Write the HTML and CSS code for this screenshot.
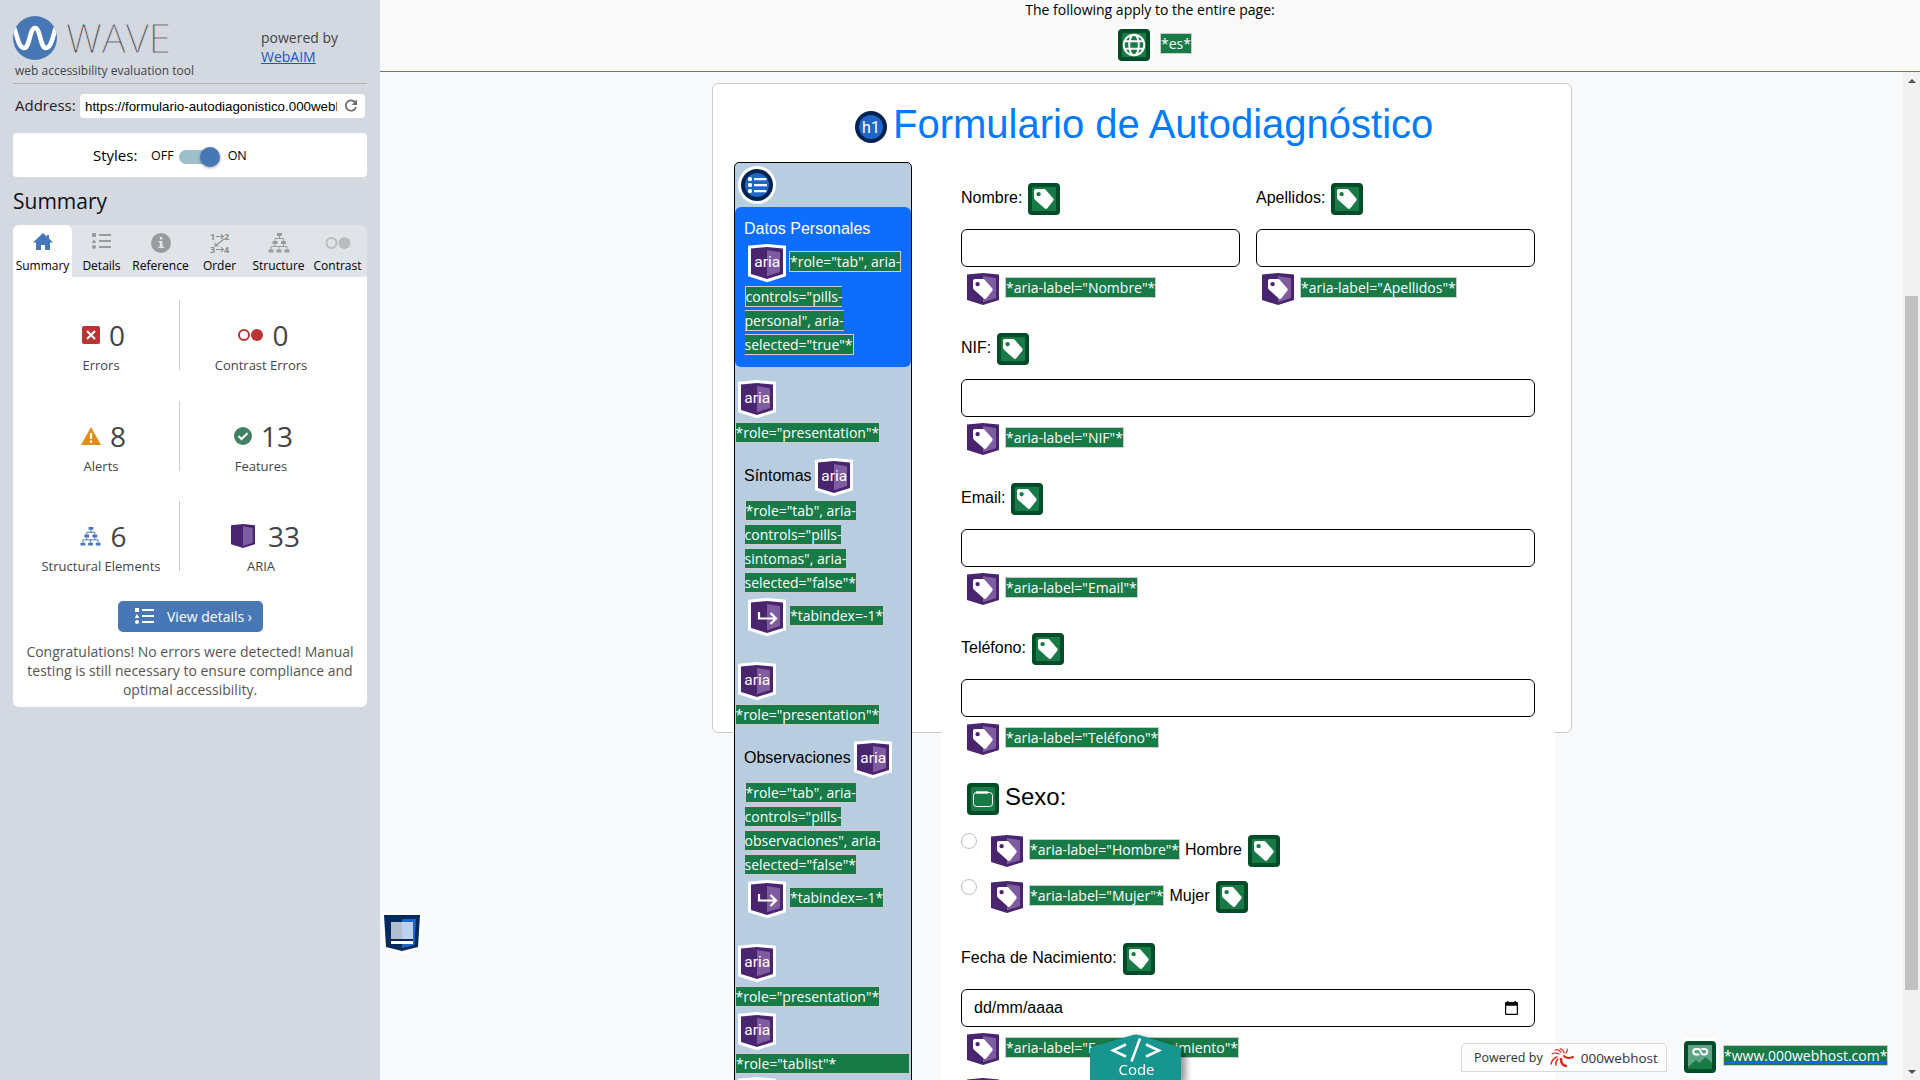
FILE: index.html
```html
<!DOCTYPE html>
<html lang="es">
<head>
<meta charset="utf-8">
<title>WAVE - Formulario de Autodiagnóstico</title>
<link rel="stylesheet" href="styles.css">
</head>
<body>
<svg class="sprite" aria-hidden="true">
  <symbol id="box" viewBox="0 0 32 32" overflow="visible">
    <path d="M0 1.5 16 0 32 1.5V27L16 32 0 27z" fill="none" stroke="#fff" stroke-width="6"/>
    <path d="M0 1.5 16 0 32 1.5V27L16 32 0 27z" fill="#4a256f"/>
    <path d="M16 3 29 5.2V25L16 29.2z" fill="#7f5b9f"/>
  </symbol>
  <symbol id="tag" viewBox="0 0 32 32">
    <path fill-rule="evenodd" fill="#fff" d="M8 6h7.600c1 0 1.600.3 2.300 1l7.200 8.200c.8 1 .8 1.800 0 2.800l-5.800 7.200c-.8.9-2 .9-2.800 0L7 16.700c-.6-.7-1-1.300-1-2.200V8c0-1.200.8-2 2-2zm2.600 2.900a2.200 2.200 0 1 0 0 4.400 2.200 2.200 0 0 0 0-4.400z"/>
  </symbol>
  <symbol id="aria" viewBox="0 0 32 32" overflow="visible"><use href="#box"/><text x="16.300" y="19.500" text-anchor="middle" font-family="Roboto, sans-serif" font-size="15.500" fill="#fff">aria</text></symbol>
  <symbol id="aria-tag" viewBox="0 0 32 32" overflow="visible"><use href="#box"/><use href="#tag"/></symbol>
  <symbol id="aria-index" viewBox="0 0 32 32" overflow="visible"><use href="#box"/><path d="M8 11v6.500h17M19.500 12l5.500 5.500-5.500 5.500" fill="none" stroke="#fff" stroke-width="2.200"/></symbol>
  <symbol id="green" viewBox="0 0 32 32" overflow="visible">
    <rect x="-3" y="-3" width="38" height="38" rx="6" fill="#fff"/>
    <rect width="32" height="32" rx="4" fill="#004d27"/><rect x="4" y="4" width="24" height="24" rx="1" fill="#177a47"/>
  </symbol>
  <symbol id="label" viewBox="0 0 32 32" overflow="visible"><use href="#green"/><use href="#tag"/></symbol>
  <symbol id="fieldset" viewBox="0 0 32 32" overflow="visible"><use href="#green"/><rect x="6.500" y="9.500" width="19" height="14" rx="3" fill="none" stroke="#fff"/><path d="M9 9.500h12" stroke="#fff" stroke-width="2.400"/></symbol>
  <symbol id="lang" viewBox="0 0 32 32" overflow="visible"><use href="#green"/><g fill="none" stroke="#fff" stroke-width="1.900"><circle cx="16" cy="16" r="10.300"/><ellipse cx="16" cy="16" rx="4.800" ry="10.300"/><path d="M7 12.200h18M7 19.800h18"/></g></symbol>
  <symbol id="linkimg" viewBox="0 0 32 32" overflow="visible"><use href="#green"/><path d="M4 4h24v18l-6.500-6-6 6-3.500-3-8 7z" fill="#5fa583"/><path d="M14.500 13.500H12a2.700 2.700 0 0 1 0-5.500h2.500c2.500 0 2 5.500 4.500 5.500h1.500a2.700 2.700 0 0 0 0-5.500H18" fill="none" stroke="#fff" stroke-width="1.900" stroke-linecap="round"/></symbol>
  <symbol id="structure" viewBox="0 0 22 20"><path fill="currentColor" d="M9 0h5v3H9zM4.500 8h5v3h-5zM13 8h5v3h-5zM.5 16.500h5v3h-5zM8.500 16.500h5v3h-5zM16.500 16.500h5v3h-5z"/><path fill="none" stroke="currentColor" d="M11.500 3v3M7 8V5.500h8.500V8M7 11v2.500M15.500 11v2.500M3 16.500v-3h16v3M11 13.500v3"/></symbol>
  <symbol id="details" viewBox="0 0 19 16"><path fill="currentColor" d="M0 0h4v4H0zM2 6l2.300 4H-.3zM7 1h12v2H7zM7 7h12v2H7zM7 13h12v2H7z"/><circle cx="2" cy="14" r="2" fill="currentColor"/></symbol>
</svg>

<div class="app">
  <aside class="sidebar">
    <header class="brand">
      <div class="brand-main">
        <div class="logo">
          <svg width="44" height="44" viewBox="0 0 44 44"><clipPath id="c"><circle cx="22" cy="22" r="22"/></clipPath><circle cx="22" cy="22" r="22" fill="#4877b6"/><path clip-path="url(#c)" d="M1 12C3.500 16 5 32 11 32S16.500 12 22 12s5 20 11 20 7.500-16 10-20" fill="none" stroke="#fff" stroke-width="4.600"/></svg>
          <span class="logo-text">WAVE</span>
        </div>
        <p class="tagline">web accessibility evaluation tool</p>
      </div>
      <p class="powered">powered by<br><a class="webaim">WebAIM</a></p>
    </header>
    <div class="address"><span class="address-label">Address:</span>
      <div class="address-box"><span class="url">https://formulario-autodiagonistico.000webh</span>
        <svg width="14" height="14" viewBox="0 0 14 14"><path d="M11.300 3.600A5.200 5.200 0 1 0 12 8" fill="none" stroke="#666" stroke-width="1.700"/><path d="M13 .6v5.400H7.800z" fill="#666"/></svg>
      </div>
    </div>
    <div class="styles-box"><span class="styles-label">Styles:</span><span class="state">OFF</span><span class="switch"><span class="thumb"></span></span><span class="state">ON</span></div>
    <h2 class="heading">Summary</h2>
    <nav class="tabs">
      <div class="tab active"><svg width="20" height="20" viewBox="0 0 20 20"><path fill="#4877b6" d="M10 0 0 9.500h3V17h5v-5h4v5h5V9.500h3l-4-4V2h-2v1.800z"/></svg>Summary</div>
      <div class="tab"><svg class="muted" width="19" height="20"><use href="#details" y="0" width="19" height="16"/></svg>Details</div>
      <div class="tab"><svg width="20" height="20" viewBox="0 0 20 20"><circle cx="10" cy="10" r="10" fill="#999b9e"/><path fill="#e0e3e7" d="M8.800 4h2.600v2.500H8.800zM7.500 8h4v5.500H13V15H7.500v-1.500h1.300v-4H7.500z"/></svg>Reference</div>
      <div class="tab"><svg class="order" width="20" height="20" viewBox="0 0 20 20" fill="none" stroke="#8c8e91" stroke-width="1.100"><path d="M6 3.500h7M11 1.200l2.300 2.300L11 5.800M6 16.500h7M11 14.200l2.300 2.300-2.300 2.300M14 6 5 13M5 9.800V13h3.500"/><g class="order-num"><text x="0" y="7">1</text><text x="14" y="7">2</text><text x="0" y="20">3</text><text x="14" y="20">4</text></g></svg>Order</div>
      <div class="tab"><svg class="muted" width="22" height="20"><use href="#structure"/></svg>Structure</div>
      <div class="tab"><svg width="26" height="20" viewBox="0 0 26 20"><circle cx="6.500" cy="10" r="5" fill="none" stroke="#b9bbbe" stroke-width="2"/><circle cx="19.500" cy="10" r="6" fill="#b9bbbe"/></svg>Contrast</div>
    </nav>
    <section class="panel">
      <div class="stats">
        <div class="stat left"><div class="value"><svg width="18" height="18" viewBox="0 0 18 18"><rect width="18" height="18" rx="2" fill="#b93434"/><path d="m5 5 8 8m0-8-8 8" stroke="#fff" stroke-width="2"/></svg>0</div>Errors</div>
        <div class="stat"><div class="value"><svg width="25" height="18" viewBox="0 0 25 18"><circle cx="6" cy="9" r="5" fill="none" stroke="#b93434" stroke-width="2"/><circle cx="19" cy="9" r="6" fill="#b93434"/></svg>0</div>Contrast Errors</div>
        <div class="stat left"><div class="value"><svg width="20" height="18" viewBox="0 0 20 18"><path d="M10 0l10 18H0z" fill="#e18c15"/><path d="M10 6v6M10 13.500v2.200" stroke="#fff" stroke-width="2.200"/></svg>8</div>Alerts</div>
        <div class="stat"><div class="value"><svg width="18" height="18" viewBox="0 0 18 18"><circle cx="9" cy="9" r="9" fill="#438062"/><path d="m4.500 9 3 3 6-5.800" fill="none" stroke="#fff" stroke-width="2"/></svg>13</div>Features</div>
        <div class="stat left"><div class="value"><svg class="blue" width="21" height="19"><use href="#structure"/></svg>6</div>Structural Elements</div>
        <div class="stat"><div class="value wide"><svg width="24" height="24" viewBox="0 0 32 32"><path d="M0 1.500 16 0 32 1.500V27L16 32 0 27z" fill="#4a256f"/><path d="M16 3 29 5.200V25L16 29.200z" fill="#7f5b9f"/></svg>33</div>ARIA</div>
      </div>
      <div class="view"><svg width="19" height="16"><use href="#details"/></svg>View details ›</div>
      <p class="message">Congratulations! No errors were detected! Manual testing is still necessary to ensure compliance and optimal accessibility.</p>
    </section>
  </aside>

  <div class="main">
    <header class="page-bar">
      <p class="page-bar-text">The following apply to the entire page:</p>
      <div class="page-bar-icons"><svg class="icon"><use href="#lang"/></svg><span class="note">*es*</span></div>
    </header>
    <div class="viewport">
      <div class="canvas">
        <div class="card">
          <h1 class="title"><svg class="icon" viewBox="0 0 32 32"><circle cx="16" cy="16" r="16" fill="#002250"/><circle cx="16" cy="16" r="12" fill="#1f66c9"/><text x="16" y="21.500" text-anchor="middle" class="h1-mark">h1</text></svg><span class="title-text">Formulario de Autodiagnóstico</span></h1>
          <div class="columns">
            <div class="pills">
              <div class="list-row"><svg class="icon" viewBox="0 0 32 32"><circle cx="16" cy="16" r="19" fill="#fff"/><circle cx="16" cy="16" r="16" fill="#002250"/><circle cx="16" cy="16" r="12" fill="#1f66c9"/><g fill="#fff"><rect x="7" y="8" width="4" height="4" rx="1.500"/><rect x="7" y="14" width="4" height="4" rx="1.500"/><rect x="7" y="20" width="4" height="4" rx="1.500"/><path d="M13 9h12.500v2.200H13zM13 15h13v2.200H13zM13 21h12.500v2.200H13z"/></g></svg></div>
              <div class="pill-active">
                <div class="pill-name">Datos Personales</div>
                <div class="line"><svg class="icon"><use href="#aria"/></svg><span class="note">*role="tab", aria-</span></div>
                <p class="notes"><span class="note">controls="pills-<br>personal", aria-<br>selected="true"*</span></p>
              </div>
              <div class="pill">
                <div class="line flush"><svg class="icon"><use href="#aria"/></svg></div>
                <div class="presentation"><span class="note">*role="presentation"*</span></div>
                <div class="line named"><span class="pill-label">Síntomas</span><svg class="icon"><use href="#aria"/></svg></div>
                <p class="notes"><span class="note">*role="tab", aria-<br>controls="pills-<br>sintomas", aria-<br>selected="false"*</span></p>
                <div class="line index"><svg class="icon"><use href="#aria-index"/></svg><span class="note">*tabindex=-1*</span></div>
              </div>
              <div class="pill">
                <div class="line flush"><svg class="icon"><use href="#aria"/></svg></div>
                <div class="presentation"><span class="note">*role="presentation"*</span></div>
                <div class="line named"><span class="pill-label">Observaciones</span><svg class="icon"><use href="#aria"/></svg></div>
                <p class="notes"><span class="note">*role="tab", aria-<br>controls="pills-<br>observaciones", aria-<br>selected="false"*</span></p>
                <div class="line index"><svg class="icon"><use href="#aria-index"/></svg><span class="note">*tabindex=-1*</span></div>
              </div>
              <div class="pill">
                <div class="line flush"><svg class="icon"><use href="#aria"/></svg></div>
                <div class="presentation"><span class="note">*role="presentation"*</span></div>
                <div class="line flush tablist"><svg class="icon"><use href="#aria"/></svg></div>
                <div class="note note-block">*role="tablist"*</div>
                <div class="line flush next"><svg class="icon"><use href="#aria-tag"/></svg></div>
              </div>
            </div>
            <div class="form">
              <div class="pair">
                <div class="group"><div class="label">Nombre:<svg class="icon"><use href="#label"/></svg></div><div class="input"></div><div class="hint"><svg class="icon"><use href="#aria-tag"/></svg><span class="note">*aria-label="Nombre"*</span></div></div>
                <div class="group"><div class="label">Apellidos:<svg class="icon"><use href="#label"/></svg></div><div class="input"></div><div class="hint"><svg class="icon"><use href="#aria-tag"/></svg><span class="note">*aria-label="Apellidos"*</span></div></div>
              </div>
              <div class="group"><div class="label">NIF:<svg class="icon"><use href="#label"/></svg></div><div class="input"></div><div class="hint"><svg class="icon"><use href="#aria-tag"/></svg><span class="note">*aria-label="NIF"*</span></div></div>
              <div class="group"><div class="label">Email:<svg class="icon"><use href="#label"/></svg></div><div class="input"></div><div class="hint"><svg class="icon"><use href="#aria-tag"/></svg><span class="note">*aria-label="Email"*</span></div></div>
              <div class="group"><div class="label">Teléfono:<svg class="icon"><use href="#label"/></svg></div><div class="input"></div><div class="hint"><svg class="icon"><use href="#aria-tag"/></svg><span class="note">*aria-label="Teléfono"*</span></div></div>
              <div class="sex">
                <div class="legend"><svg class="icon"><use href="#fieldset"/></svg><span>Sexo:</span></div>
                <div class="choice"><span class="radio"></span><svg class="icon"><use href="#aria-tag"/></svg><span class="note">*aria-label="Hombre"*</span><span class="choice-text">Hombre</span><svg class="icon"><use href="#label"/></svg></div>
                <div class="choice"><span class="radio"></span><svg class="icon"><use href="#aria-tag"/></svg><span class="note">*aria-label="Mujer"*</span><span class="choice-text">Mujer</span><svg class="icon"><use href="#label"/></svg></div>
              </div>
              <div class="group"><div class="label">Fecha de Nacimiento:<svg class="icon"><use href="#label"/></svg></div><div class="input date"><span>dd/mm/aaaa</span><svg width="13" height="14" viewBox="0 0 13 14"><path fill="#000" fill-rule="evenodd" d="M2 0h1.500v1h6V0H11v1h1q1 0 1 1v11q0 1-1 1H1q-1 0-1-1V2q0-1 1-1h1zM1.200 4.700v8h10.600v-8z"/></svg></div><div class="hint"><svg class="icon"><use href="#aria-tag"/></svg><span class="note">*aria-label="Fecha de Nacimiento"*</span></div></div>
              <div class="hint extra"><svg class="icon"><use href="#aria-tag"/></svg></div>
            </div>
          </div>
        </div>
      </div>
      <div class="scrollbar"><span class="arrow up"></span><span class="grip"></span><span class="arrow down"></span></div>
    </div>
    <svg class="region-icon" width="36" height="38" viewBox="0 0 36 38"><path d="M0 1h36l-2 32-16 4-16-4z" fill="#022a5e" stroke="#fff" stroke-width="5" paint-order="stroke"/><path d="M18 5h14l-1.500 26L18 34z" fill="#1f66c9"/><path d="M7 8h11v17H7z" fill="#b2bdce"/><path d="M18 8h11v17H18z" fill="#bcd1ef"/><path d="M7 25h22v2H7z" fill="#022a5e"/><path d="M7 27h22v3H7z" fill="#fff"/></svg>
    <div class="code-tab"><svg width="92" height="46" viewBox="0 0 92 46"><path d="M0 46V15.500Q0 14 2 13L42 1.200q4-1.200 8 0L89 13q2 .8 2 2.500V46z" fill="#17968f"/><path d="M36 10.500 23 16.500l13 6M56 10.500l13 6-13 6M50 4.500l-8.500 23" fill="none" stroke="#fff" stroke-width="2.500"/><text x="46.500" y="41" text-anchor="middle" class="code-text">Code</text></svg></div>
    <footer class="host">
      <div class="host-box"><span>Powered by</span>
        <svg width="24" height="20" viewBox="0 0 24 20" fill="none" stroke="#d9291c" stroke-linecap="round"><path d="M14 8q3 3.500 9 1" stroke-width="2"/><path d="M11 11q0 6 5 7" stroke-width="2.400"/><path d="M8 11q-3 3-2 6M7 9q-5 2-6 7" stroke-width="1.400"/><path d="M9 6Q4 4 2 6M11 4Q8 1 5 2M14 5Q13 1 10 .8M16 5q2-2 1-4" stroke-width="1.200" stroke-dasharray="3 1"/></svg>
        <b class="host-name">000webhost</b></div>
      <svg class="icon"><use href="#linkimg"/></svg><span class="note host-note">*www.000webhost.com*</span>
    </footer>
  </div>
</div>
</body>
</html>
```
FILE: styles.css
```css
* { box-sizing: border-box; }
body { margin: 0; width: 1920px; height: 1080px; overflow: hidden; font-family: "Open Sans", sans-serif; color: #000; }
p, h1, h2 { margin: 0; font-weight: 400; }
svg { flex: none; display: block; }
.sprite { position: absolute; width: 0; height: 0; }
.app { display: flex; width: 1920px; height: 1080px; }
.icon { width: 32px; height: 32px; overflow: visible; }

/* Sidebar */
.sidebar { width: 380px; height: 1080px; padding: 0 13px; background: #d4d8e0; }
.brand { display: flex; justify-content: space-between; height: 84px; border-bottom: 1px solid #b3b5b9; color: #444; }
.logo { display: flex; align-items: center; padding-top: 15px; height: 60px; }
.logo-text { margin-left: 9px; font-size: 40px; line-height: 44px; font-weight: 300; -webkit-text-stroke: .8px #d4d8e0; }
.tagline { padding: 1px 0 0 2px; font-size: 12px; line-height: 20px; white-space: nowrap; }
.powered { width: 106px; padding-top: 28px; font-size: 14px; line-height: 19px; }
.webaim { color: #1a56c4; text-decoration: underline; }
.address { display: flex; align-items: center; height: 24px; margin-top: 10px; padding: 0 2px; }
.address-label { width: 65px; margin-bottom: 2px; font-size: 15px; color: #222; }
.address-box { display: flex; align-items: center; width: 285px; height: 24px; padding: 0 7px 0 5px; border-radius: 4px; background: #fff; }
.url { width: 253px; margin-right: 7px; overflow: hidden; white-space: nowrap; font: 13.333px "Liberation Sans", sans-serif; }
.styles-box { display: flex; align-items: center; height: 44px; margin-top: 15px; padding-left: 80px; border-radius: 4px; background: #fff; }
.styles-label { width: 58px; font-size: 15px; }
.state { font-size: 12.500px; }
.switch { width: 36px; height: 14px; margin: 4px 13px 0 5px; border-radius: 7px; background: #9dc0cb; }
.thumb { display: block; width: 20px; height: 20px; margin: -3px 0 0 21px; border-radius: 50%; background: #4877b6; box-shadow: 0 1px 3px rgba(0,0,0,.4); }
.heading { height: 48px; padding-top: 10px; font-size: 21px; line-height: 28px; color: #111; }
.tabs { display: grid; grid-template-columns: repeat(6, 59px); height: 52px; border-radius: 6px 6px 0 0; background: #e0e3e7; }
.tab { display: flex; flex-direction: column; align-items: center; gap: 4px; padding-top: 8px; font-size: 12px; line-height: 17px; white-space: nowrap; }
.tab.active { border-radius: 6px 6px 0 0; background: #fff; }
.muted { color: #999b9e; }
.blue { color: #4877b6; }
.order { overflow: visible; }
.order-num { fill: #8c8e91; stroke: none; font: 700 9px "Open Sans", sans-serif; }
.panel { height: 430px; border-radius: 0 0 6px 6px; background: #fff; color: #444; }
.stats { display: grid; grid-template-columns: 157px 162px; grid-auto-rows: 70px; row-gap: 30.500px; padding: 23px 0 0 10px; }
.stat { padding-top: 15px; font-size: 13px; line-height: 18px; text-align: center; }
.stat.left { border-right: 1px solid #ccc; }
.value { display: flex; align-items: center; justify-content: center; gap: 9px; height: 40px; margin-bottom: 1px; padding-left: 5px; font-size: 28px; line-height: 40px; }
.value.wide { gap: 13px; padding-left: 9px; }
.view { display: flex; align-items: center; width: 145px; height: 31px; margin: 30px 0 0 105px; padding: 0 0 1px 17px; gap: 13px; border-radius: 5px; background: #4877b6; color: #fff; font-size: 14px; }
.message { padding: 10px 10px 0; font-size: 14px; line-height: 19px; text-align: center; color: #555; }

/* Evaluated page */
.main { position: relative; width: 1540px; height: 1080px; }
.page-bar { height: 72px; border-bottom: 1px solid #6c7b66; background: #f9f9f9; }
.page-bar-text { font-size: 14px; line-height: 20px; text-align: center; }
.page-bar-icons { display: flex; align-items: flex-start; padding: 9px 0 0 738px; gap: 10px; }
.page-bar-icons .note { margin-top: 4px; }
.viewport { display: flex; height: 1008px; background: #f8f9fa; overflow: hidden; }
.canvas { flex: 1; padding: 11px 0 0 332px; font-family: "Liberation Sans", sans-serif; font-size: 16px; }
.card { width: 860px; height: 650px; border: 1px solid #ccc; border-radius: 6px; background: #fff; }
.title { display: flex; align-items: center; height: 78px; padding-left: 142px; font-size: 40px; line-height: 46px; color: #007bff; white-space: nowrap; }
.title .icon { margin: 8px 7px 0 0; }
.title-text { margin: 2px 0 0 -1px; }
.h1-mark { font: 16px Roboto, sans-serif; fill: #fff; }
.columns { display: flex; align-items: flex-start; padding-left: 21px; }
.note { border: 1px solid #ccc; background: #177a47; color: #fff; font: 14px/19px "Open Sans", sans-serif; white-space: nowrap; }
.pills { width: 178px; height: 940px; border: 1px solid #000; border-radius: 5px; background: #b9cde0; }
.list-row { height: 44px; padding: 6px; }
.pill-active { height: 160px; padding: 13px 0 0 10px; border-radius: 6px; background: #0d6efd; color: #fff; }
.pill-name { margin-left: -1px; line-height: 18px; }
.line { display: flex; align-items: center; height: 38px; padding-left: 16px; gap: 6px; }
.line .note { margin-bottom: 3px; }
.pill-active .line { height: 48px; margin-top: 1px; padding-left: 6px; }
.notes { padding-left: 9.500px; font: 14px/24px "Open Sans", sans-serif; }
.notes .note { line-height: 24px; }
.pill-active .notes { padding-left: 0; margin: -2px 0 0 -.5px; }
.pill { height: 282px; padding-top: 13px; }
.line.flush { padding-left: 6px; }
.line.named { margin-top: 14px; padding-left: 9px; gap: 6px; }
.pill-label { margin-bottom: 3px; }
.presentation { height: 21px; margin: 5px 0 0 -.5px; line-height: 20px; }
.pill .notes { margin-top: 3px; }
.line.index { margin-top: 3px; }
.line.tablist { margin-top: 4px; }
.note-block { height: 21px; margin: 3px 1px 0 0; }
.line.next { margin-top: 3px; }
.form { width: 614px; height: 1000px; margin: 13px 0 0 29px; padding: 0 20px; background: #fff; }
.pair { display: grid; grid-template-columns: 279px 279px; gap: 16px; }
.group { height: 150px; }
.label { display: flex; height: 48px; padding-top: 8px; gap: 6px; line-height: 30px; }
.input { height: 38px; margin-top: 6px; border: 1px solid #000; border-radius: 6px; background: #fff; }
.hint { display: flex; height: 38px; padding: 6px 0 0 6px; gap: 6px; }
.hint .note { height: 21px; margin-top: 4px; }
.sex { height: 160px; }
.legend { display: flex; height: 53px; padding: 8px 0 0 6px; gap: 6px; font-size: 24px; line-height: 28px; }
.choice { display: flex; height: 46px; padding-top: 7px; }
.radio { width: 16px; height: 16px; margin: -2px 14px 0 0; border: 1px solid #bfbfbf; border-radius: 50%; }
.choice .note { height: 21px; margin: 4px 5px 0 6px; }
.choice-text { margin-right: 6px; line-height: 30px; }
.date { display: flex; align-items: center; justify-content: space-between; padding: 0 16px 0 12px; }
.extra { margin-top: -13px; }

/* Scrollbar */
.scrollbar { display: flex; flex-direction: column; align-items: center; width: 17px; height: 1008px; background: #f1f1f1; }
.arrow { border: 4px solid transparent; }
.up { margin-top: 3px; border-bottom-color: #505050; }
.grip { width: 13px; height: 694px; margin-top: 213px; background: #c1c1c1; }
.down { margin-top: auto; margin-bottom: 2px; border-top-color: #505050; }

/* Overlays */
.region-icon { position: absolute; left: 4px; top: 914px; overflow: visible; }
.code-tab { position: absolute; left: 710px; top: 1034px; filter: drop-shadow(5px 3px 3px rgba(0,0,0,.4)); }
.code-text { font: 15px "Open Sans", sans-serif; fill: #fff; }
.host { position: absolute; left: 1081px; top: 1041px; display: flex; align-items: flex-start; }
.host-box { display: flex; align-items: center; width: 206px; height: 29px; margin: 2px 17px 0 0; padding: 0 12px; border: 1px solid #d8d8d8; border-radius: 5px 5px 0 0; background: #fcfcfc; font-size: 12.500px; gap: 7px; color: #333; white-space: nowrap; }
.host-name { font: 500 13.500px "Open Sans", sans-serif; }
.host-note { margin: 4px 0 0 7px; text-decoration: underline; text-decoration-color: #0d6efd; }
```
